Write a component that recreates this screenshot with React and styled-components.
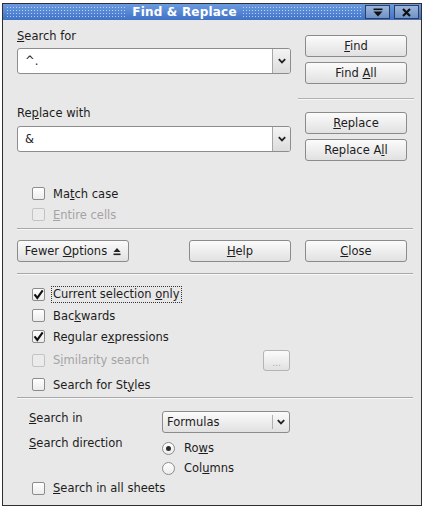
import React from 'react';
import styled, { createGlobalStyle } from 'styled-components';

const Global = createGlobalStyle`
  html, body { margin: 0; padding: 0; background: #ffffff; }
  body { font-family: "DejaVu Sans", "Liberation Sans", sans-serif; font-size: 11.5px; color: #1c1c1c; }
  * { box-sizing: border-box; }
`;

const Window = styled.div`
  margin: 3px 0 0 2px;
  width: 420px;
  height: 503px;
  border: 1px solid #2f2f2f;
  box-shadow: 0 1px 0 #8a8a8a;
  background: #e8e8e8;
  display: flex;
  flex-direction: column;
`;

const TitleBar = styled.div`
  height: 16px;
  display: flex;
  align-items: stretch;
  background: linear-gradient(#6b9be0, #3f72c6);
  padding: 0 2px 0 3px;
`;

const Dots = styled.div`
  flex: 1;
  margin: 2px 0 3px;
  background-image: radial-gradient(circle, rgba(200, 222, 255, 0.85) 0.7px, transparent 1px);
  background-size: 3px 3px;
`;

const TitleText = styled.div`
  font-weight: bold;
  color: #ffffff;
  font-size: 12px;
  line-height: 16px;
  padding: 0 5px;
  letter-spacing: 0.2px;
`;

const TitleButtons = styled.div`
  display: flex;
  gap: 4px;
  margin-left: 2px;
  padding: 1px 0 1px;
`;

const TitleButton = styled.div`
  width: 25px;
  height: 14px;
  border: 1px solid #2f3d55;
  background: linear-gradient(#9cb6dc, #6f92c6);
  display: flex;
  align-items: center;
  justify-content: center;
`;

const Content = styled.div`
  flex: 1;
  padding: 0 8px 0 14px;
  display: flex;
  flex-direction: column;
`;

const TopGrid = styled.div`
  display: grid;
  grid-template-columns: 274px 102px;
  column-gap: 14px;
`;

const Column = styled.div`
  display: flex;
  flex-direction: column;
`;

const Label = styled.div`
  line-height: 18px;
  margin-top: ${(p) => p.$mt || 0}px;
  color: ${(p) => (p.$disabled ? '#a4a4a4' : '#1c1c1c')};
  white-space: nowrap;
`;

const U = styled.span`
  text-decoration: underline;
  text-underline-offset: 1px;
`;

const Combo = styled.div`
  margin-top: ${(p) => p.$mt || 0}px;
  height: 26px;
  border: 1px solid #8d8d8d;
  border-radius: 3px;
  background: #ffffff;
  display: flex;
  overflow: hidden;
`;

const ComboValue = styled.div`
  flex: 1;
  padding-left: 7px;
  line-height: 24px;
  color: #222;
`;

const ComboArrow = styled.div`
  width: 18px;
  border-left: 1px solid #a6a6a6;
  background: linear-gradient(#f4f4f4, #dcdcdc);
  display: flex;
  align-items: center;
  justify-content: center;
`;

const Button = styled.div`
  margin-top: ${(p) => p.$mt || 0}px;
  height: 22px;
  width: ${(p) => (p.$w ? `${p.$w}px` : 'auto')};
  border: 1px solid #8b8b8b;
  border-radius: 3px;
  background: linear-gradient(#fbfbfb, #e1e1e1);
  display: flex;
  align-items: center;
  justify-content: center;
  gap: 6px;
  line-height: 20px;
  white-space: nowrap;
  flex: none;
  color: ${(p) => (p.$disabled ? '#a8a8a8' : '#1c1c1c')};
  border-color: ${(p) => (p.$disabled ? '#b4b4b4' : '#8b8b8b')};
`;

const RightSep = styled.div`
  margin: ${(p) => p.$mt || 0}px -7px 0;
  height: 2px;
  border-top: 1px solid #b0b0b0;
  border-bottom: 1px solid #f7f7f7;
`;

const Sep = styled.div`
  margin-top: ${(p) => p.$mt || 0}px;
  height: 2px;
  border-top: 1px solid #a8a8a8;
  border-bottom: 1px solid #f7f7f7;
`;

const Options = styled.div`
  margin-top: ${(p) => p.$mt || 0}px;
  padding-left: 15px;
  display: flex;
  flex-direction: column;
`;

const CheckRow = styled.div`
  height: ${(p) => p.$h || 21}px;
  margin-top: ${(p) => p.$mt || 0}px;
  display: flex;
  align-items: center;
  gap: 8px;
  color: ${(p) => (p.$disabled ? '#a4a4a4' : '#1c1c1c')};
  white-space: nowrap;
`;

const FixedLabel = styled.span`
  width: ${(p) => p.$w}px;
  flex: none;
`;

const Box = styled.div`
  width: 13px;
  height: 13px;
  flex: none;
  border: 1px solid ${(p) => (p.$disabled ? '#c3c3c3' : '#8c8c8c')};
  border-radius: 2px;
  background: ${(p) => (p.$disabled ? '#ebebeb' : 'linear-gradient(#ffffff, #ececec)')};
  display: flex;
  align-items: center;
  justify-content: center;
`;

const Focus = styled.span`
  outline: 1px dotted #333;
  outline-offset: 0px;
  padding: 0 1px;
  margin-left: -1px;
  line-height: 15px;
`;

const Spacer = styled.div`
  width: ${(p) => p.$w}px;
  flex: none;
`;

const ButtonRow = styled.div`
  margin-top: ${(p) => p.$mt || 0}px;
  display: flex;
  align-items: center;
`;

const SmallButton = styled(Button)`
  width: 27px;
  height: 21px;
  font-size: 9px;
  align-items: flex-end;
  line-height: 14px;
`;

const BottomGrid = styled.div`
  margin-top: ${(p) => p.$mt || 0}px;
  padding-left: 12px;
  display: grid;
  grid-template-columns: 133px 128px;
  align-items: start;
`;

const FieldLabel = styled.div`
  line-height: 16px;
  margin-top: ${(p) => p.$mt || 0}px;
  white-space: nowrap;
`;

const SelectBox = styled.div`
  margin-top: 1px;
  height: 22px;
  border: 1px solid #8b8b8b;
  border-radius: 3px;
  background: linear-gradient(#fbfbfb, #e1e1e1);
  display: flex;
`;

const SelectValue = styled.div`
  flex: 1;
  padding-left: 4px;
  line-height: 20px;
`;

const SelectArrow = styled.div`
  width: 17px;
  border-left: 1px solid #b0b0b0;
  margin: 3px 0;
  display: flex;
  align-items: center;
  justify-content: center;
`;

const RadioGroup = styled.div`
  margin-top: 5px;
  display: flex;
  flex-direction: column;
`;

const RadioRow = styled.div`
  height: 20px;
  display: flex;
  align-items: center;
  gap: 9px;
`;

const Radio = styled.div`
  width: 13px;
  height: 13px;
  border-radius: 50%;
  border: 1px solid #8c8c8c;
  background: linear-gradient(#ffffff, #ececec);
  display: flex;
  align-items: center;
  justify-content: center;
  &::after {
    content: '';
    width: 5px;
    height: 5px;
    border-radius: 50%;
    background: ${(p) => (p.$on ? '#2c2c2c' : 'transparent')};
  }
`;

const Chevron = () => (
  <svg width="8" height="6" viewBox="0 0 8 6">
    <path d="M0.8 1.2 L4 4.4 L7.2 1.2" fill="none" stroke="#222" strokeWidth="1.8" />
  </svg>
);

const Check = () => (
  <svg width="11" height="11" viewBox="0 0 11 11">
    <path d="M1.5 5.4 L4.3 8.9 L9.7 1.4" fill="none" stroke="#111" strokeWidth="2.1" />
  </svg>
);

const ShadeIcon = () => (
  <svg width="10" height="9" viewBox="0 0 10 9">
    <rect x="0.5" y="0.5" width="9" height="1.6" fill="#111" />
    <path d="M0.5 3.5 L9.5 3.5 L5 8.5 Z" fill="#111" />
  </svg>
);

const CloseIcon = () => (
  <svg width="9" height="9" viewBox="0 0 9 9">
    <path d="M1 1 L8 8 M8 1 L1 8" stroke="#111" strokeWidth="2.2" />
  </svg>
);

const CollapseIcon = () => (
  <svg width="8" height="9" viewBox="0 0 8 9">
    <path d="M0.5 5 L4 1 L7.5 5 Z" fill="#222" />
    <rect x="0.5" y="6.5" width="7" height="1.6" fill="#222" />
  </svg>
);

const CheckBox = ({ checked, disabled }) => (
  <Box $disabled={disabled}>{checked && <Check />}</Box>
);

export default function App() {
  return (
    <>
      <Global />
      <Window>
        <TitleBar>
          <Dots />
          <TitleText>Find &amp; Replace</TitleText>
          <Dots />
          <TitleButtons>
            <TitleButton><ShadeIcon /></TitleButton>
            <TitleButton><CloseIcon /></TitleButton>
          </TitleButtons>
        </TitleBar>
        <Content>
          <TopGrid>
            <Column>
              <Label $mt={7}><U>S</U>earch for</Label>
              <Combo $mt={3}>
                <ComboValue>^.</ComboValue>
                <ComboArrow><Chevron /></ComboArrow>
              </Combo>
              <Label $mt={30}>Re<U>p</U>lace with</Label>
              <Combo $mt={4}>
                <ComboValue>&amp;</ComboValue>
                <ComboArrow><Chevron /></ComboArrow>
              </Combo>
            </Column>
            <Column>
              <Button $mt={15}><span><U>F</U>ind</span></Button>
              <Button $mt={5}><span>Find <U>A</U>ll</span></Button>
              <RightSep $mt={14} />
              <Button $mt={12}><span><U>R</U>eplace</span></Button>
              <Button $mt={5}><span>Replace A<U>l</U>l</span></Button>
            </Column>
          </TopGrid>

          <Options $mt={22}>
            <CheckRow><CheckBox /><span>Ma<U>t</U>ch case</span></CheckRow>
            <CheckRow $disabled><CheckBox disabled /><span><U>E</U>ntire cells</span></CheckRow>
          </Options>

          <Sep $mt={3} />

          <ButtonRow $mt={10}>
            <Button $w={112}><span>Fewer <U>O</U>ptions</span><CollapseIcon /></Button>
            <Spacer $w={60} />
            <Button $w={102}><span><U>H</U>elp</span></Button>
            <Spacer $w={14} />
            <Button $w={102}><span><U>C</U>lose</span></Button>
          </ButtonRow>

          <Sep $mt={11} />

          <Options $mt={9}>
            <CheckRow><CheckBox checked /><Focus>Current selection <U>o</U>nly</Focus></CheckRow>
            <CheckRow><CheckBox /><span>Bac<U>k</U>wards</span></CheckRow>
            <CheckRow><CheckBox checked /><span>Regular e<U>x</U>pressions</span></CheckRow>
            <CheckRow $h={26} $disabled>
              <CheckBox disabled />
              <FixedLabel $w={202}>S<U>i</U>milarity search</FixedLabel>
              <SmallButton $disabled>...</SmallButton>
            </CheckRow>
            <CheckRow $mt={1}><CheckBox /><span>Search for St<U>y</U>les</span></CheckRow>
          </Options>

          <Sep $mt={2} />

          <BottomGrid $mt={11}>
            <FieldLabel><U>S</U>earch in</FieldLabel>
            <SelectBox>
              <SelectValue>Formulas</SelectValue>
              <SelectArrow><Chevron /></SelectArrow>
            </SelectBox>
            <FieldLabel $mt={2}><U>S</U>earch direction</FieldLabel>
            <RadioGroup>
              <RadioRow><Radio $on /><span>Ro<U>w</U>s</span></RadioRow>
              <RadioRow><Radio /><span>Col<U>u</U>mns</span></RadioRow>
            </RadioGroup>
          </BottomGrid>

          <Options $mt={0}>
            <CheckRow $h={20}><CheckBox /><span><U>S</U>earch in all sheets</span></CheckRow>
          </Options>
        </Content>
      </Window>
    </>
  );
}
